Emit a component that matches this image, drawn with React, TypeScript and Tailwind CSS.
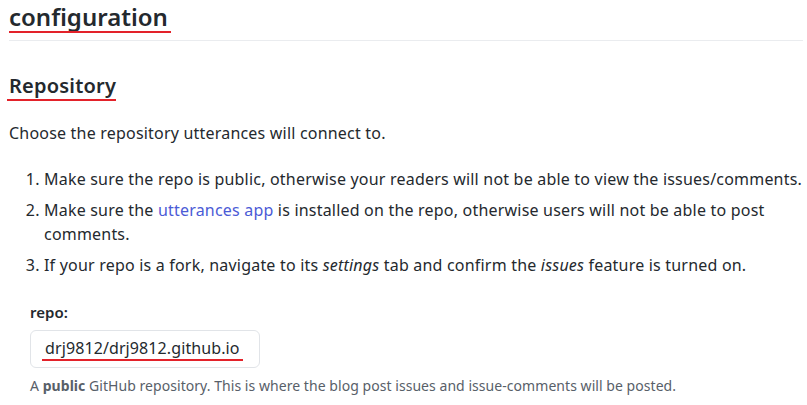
import React from "react";

export default function App() {
  return (
    <div className="w-[807px] h-[405px] overflow-hidden bg-white pl-[9px] pr-[4px] pt-[2px] font-['Noto_Sans','Open_Sans',sans-serif] text-[#24292e]">
      <h2 className="text-[24px] font-semibold leading-[30px] pb-[8px] border-b border-[#eaecef]">
        <span className="relative inline-block">
          configuration
          <span className="absolute left-0 right-[-3px] top-[29px] h-[2px] bg-[#e3222a]" />
        </span>
      </h2>
      <h3 className="mt-[32px] text-[20px] font-semibold leading-[25px] tracking-[0.2px]">
        <span className="relative inline-block -ml-[2px] pl-[2px]">
          Repository
          <span className="absolute left-0 right-0 top-[26px] h-[2px] bg-[#e3222a]" />
        </span>
      </h3>
      <p className="mt-[23px] text-[16px] leading-[24px] tracking-[0.2px]">Choose the repository utterances will connect to.</p>
      <ol className="mt-[22px] list-decimal pl-[35px] text-[16px] leading-[24px] tracking-[0.2px] flex flex-col gap-[7px]">
        <li>
          Make sure the repo is public, otherwise your readers will not be able to view the issues/comments.
        </li>
        <li>
          Make sure the <a className="text-[#4b5bd6]">utterances app</a> is installed on the repo, otherwise users
          will not be able to post comments.
        </li>
        <li>
          If your repo is a fork, navigate to its <em>settings</em> tab and confirm the <em>issues</em> feature is
          turned on.
        </li>
      </ol>
      <div className="pl-[21px] mt-[25px]">
        <div className="text-[15px] font-semibold leading-[20px]">repo:</div>
        <div className="mt-[8px] w-[230px] h-[38px] border border-[#e1e4e8] rounded-[6px] pl-[14px] pt-[5px] text-[16px] leading-[24px] tracking-[0.1px]">
          <span className="relative inline-block">
            drj9812/drj9812.github.io
            <span className="absolute left-[-3px] right-[-3px] top-[23px] h-[2px] bg-[#e3222a]" />
          </span>
        </div>
        <p className="mt-[8px] text-[14px] leading-[20px] tracking-[0.05px] text-[#586069]">
          A <strong className="font-bold">public</strong> GitHub repository. This is where the blog post issues and
          issue-comments will be posted.
        </p>
      </div>
    </div>
  );
}
